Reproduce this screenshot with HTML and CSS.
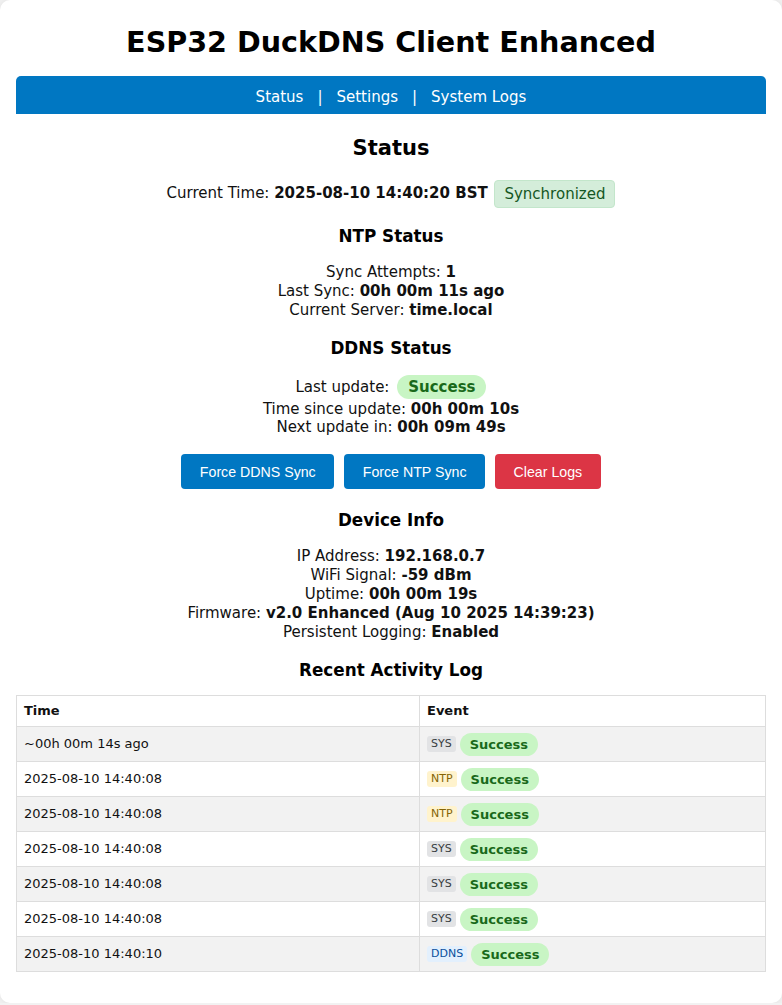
FILE: index.html
```html
<!DOCTYPE html>
<html lang="en">
<head>
<meta charset="utf-8">
<title>ESP32 DuckDNS Client Enhanced</title>
<link rel="stylesheet" href="styles.css">
</head>
<body>
<div class="card">
  <h1 class="title">ESP32 DuckDNS Client Enhanced</h1>
  <nav class="nav">
    <a href="#" class="nav-link">Status</a><span class="nav-sep">|</span><a href="#" class="nav-link">Settings</a><span class="nav-sep">|</span><a href="#" class="nav-link">System Logs</a>
  </nav>

  <h2 class="page-heading">Status</h2>
  <p class="time-line">Current Time: <b>2025-08-10 14:40:20 BST</b> <span class="sync-badge">Synchronized</span></p>

  <h3 class="section-heading">NTP Status</h3>
  <div class="info-lines">
    <div>Sync Attempts: <b>1</b></div>
    <div>Last Sync: <b>00h 00m 11s ago</b></div>
    <div>Current Server: <b>time.local</b></div>
  </div>

  <h3 class="section-heading">DDNS Status</h3>
  <div class="info-lines ddns">
    <div class="pill-line">Last update: <span class="pill pill-lg">Success</span></div>
    <div>Time since update: <b>00h 00m 10s</b></div>
    <div>Next update in: <b>00h 09m 49s</b></div>
  </div>

  <div class="actions">
    <button class="btn btn-blue">Force DDNS Sync</button>
    <button class="btn btn-blue">Force NTP Sync</button>
    <button class="btn btn-red">Clear Logs</button>
  </div>

  <h3 class="section-heading device">Device Info</h3>
  <div class="info-lines">
    <div>IP Address: <b>192.168.0.7</b></div>
    <div>WiFi Signal: <b>-59 dBm</b></div>
    <div>Uptime: <b>00h 00m 19s</b></div>
    <div>Firmware: <b>v2.0 Enhanced (Aug 10 2025 14:39:23)</b></div>
    <div>Persistent Logging: <b>Enabled</b></div>
  </div>

  <h3 class="section-heading log-heading">Recent Activity Log</h3>
  <table class="log-table">
    <tr><th class="col-time">Time</th><th>Event</th></tr>
    <tr><td>~00h 00m 14s ago</td><td><div class="event"><span class="tag tag-sys">SYS</span><span class="pill">Success</span></div></td></tr>
    <tr><td>2025-08-10 14:40:08</td><td><div class="event"><span class="tag tag-ntp">NTP</span><span class="pill">Success</span></div></td></tr>
    <tr><td>2025-08-10 14:40:08</td><td><div class="event"><span class="tag tag-ntp">NTP</span><span class="pill">Success</span></div></td></tr>
    <tr><td>2025-08-10 14:40:08</td><td><div class="event"><span class="tag tag-sys">SYS</span><span class="pill">Success</span></div></td></tr>
    <tr><td>2025-08-10 14:40:08</td><td><div class="event"><span class="tag tag-sys">SYS</span><span class="pill">Success</span></div></td></tr>
    <tr><td>2025-08-10 14:40:08</td><td><div class="event"><span class="tag tag-sys">SYS</span><span class="pill">Success</span></div></td></tr>
    <tr><td>2025-08-10 14:40:10</td><td><div class="event"><span class="tag tag-ddns">DDNS</span><span class="pill">Success</span></div></td></tr>
  </table>
</div>
</body>
</html>
```

FILE: styles.css
```css
html, body {
  margin: 0;
  padding: 0;
}
body {
  background: #f2f2f2;
  font-family: "DejaVu Sans", Verdana, sans-serif;
  font-size: 15px;
  color: #111;
}
.card {
  background: #fff;
  border-radius: 10px;
  box-shadow: 0 0 8px rgba(0, 0, 0, 0.08);
  padding: 16px 16px 31px;
  height: 1003px;
  box-sizing: border-box;
  text-align: center;
}
.title {
  font-size: 28.6px;
  line-height: 38px;
  margin: 7px 0 15px;
  font-weight: bold;
  color: #000;
}
.nav {
  background: #0077c2;
  height: 38px;
  line-height: 38px;
  padding-top: 2px;
  box-sizing: border-box;
  border-radius: 5px 5px 0 0;
  color: #fff;
  font-size: 15px;
}
.nav-link {
  color: #fff;
  text-decoration: none;
}
.nav-sep {
  margin: 0 14px;
}
.page-heading {
  font-size: 21px;
  line-height: 26px;
  margin: 21px 0 0;
  color: #000;
}
.time-line {
  margin: 18px 0 0;
  line-height: 28px;
}
.sync-badge {
  display: inline-block;
  vertical-align: middle;
  margin-left: 2px;
  padding: 4px 9px;
  line-height: 18px;
  background: #d4edda;
  color: #155724;
  border: 1px solid #c3e6cb;
  border-radius: 4px;
}
.section-heading {
  font-size: 16.8px;
  line-height: 22px;
  margin: 17px 0 0;
  color: #000;
}
.section-heading.device {
  margin-top: 20px;
}
.section-heading.log-heading {
  margin-top: 17px;
}
.info-lines {
  margin-top: 16px;
  line-height: 19px;
}
.info-lines.ddns {
  margin-top: 16px;
  line-height: 18.5px;
}
.pill-line {
  line-height: 25px;
}
.pill {
  display: inline-block;
  background: #c8f5c4;
  color: #19691a;
  font-weight: bold;
  font-size: 13px;
  line-height: 15px;
  padding: 4px 10px;
  border-radius: 12px;
  vertical-align: middle;
}
.pill-lg {
  font-size: 15px;
  line-height: 18px;
  padding: 3px 11px;
  margin-left: 3px;
}
.actions {
  display: flex;
  justify-content: center;
  gap: 10px;
  margin-top: 17px;
}
.btn {
  font-family: "Liberation Sans", Arial, sans-serif;
  font-size: 14.2px;
  line-height: 16px;
  color: #fff;
  border: none;
  border-radius: 4px;
  padding: 10px 18.5px 9px;
}
.btn-blue {
  background: #0077c2;
}
.btn-red {
  background: #dc3545;
}
.log-table {
  width: 100%;
  margin-top: 14px;
  border-collapse: collapse;
  text-align: left;
  font-size: 13px;
}
.log-table th,
.log-table td {
  border: 1px solid #ddd;
  color: #111;
}
.log-table .col-time {
  width: 388px;
}
.log-table th {
  padding: 8px 7px;
  line-height: 14px;
}
.log-table td {
  padding: 6px 7px 5px;
  line-height: 20px;
}
.log-table tr:nth-child(even) {
  background: #f2f2f2;
}
.event {
  display: flex;
  align-items: center;
  gap: 4px;
  height: 23px;
}
.tag {
  display: inline-block;
  font-size: 11px;
  line-height: 14px;
  padding: 1px 4px;
  border-radius: 3px;
}
.tag-sys {
  background: #e2e3e5;
  color: #383d41;
}
.tag-ntp {
  background: #fff3cd;
  color: #856404;
}
.tag-ddns {
  background: #e3f0fd;
  color: #0a4f9c;
}
```
